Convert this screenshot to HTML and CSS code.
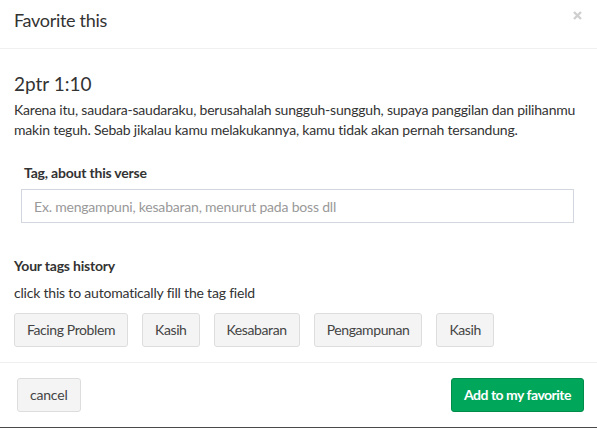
FILE: index.html
```html
<!DOCTYPE html>
<html>
<head>
<meta charset="utf-8">
<link rel="stylesheet" href="styles.css">
</head>
<body>
<div class="modal">
  <div class="modal-header">
    <h4 class="modal-title">Favorite this</h4>
    <button class="close" type="button" aria-label="Close">
      <svg width="9" height="9" viewBox="0 0 9 9"><path d="M1 1L8 8M8 1L1 8" stroke="#cfcfcf" stroke-width="2.4" stroke-linecap="butt"/></svg>
    </button>
  </div>
  <div class="modal-body">
    <h4 class="verse-ref">2ptr 1:10</h4>
    <p class="verse-text">Karena itu, saudara-saudaraku, berusahalah sungguh-sungguh, supaya panggilan dan pilihanmu makin teguh. Sebab jikalau kamu melakukannya, kamu tidak akan pernah tersandung.</p>
    <div class="form-group">
      <label class="label">Tag, about this verse</label>
      <input class="form-control" type="text" placeholder="Ex. mengampuni, kesabaran, menurut pada boss dll">
    </div>
    <div class="history">
      <div class="history-title">Your tags history</div>
      <div class="history-hint">click this to automatically fill the tag field</div>
      <div class="tags">
        <button class="btn btn-default btn-tag" type="button">Facing Problem</button>
        <button class="btn btn-default btn-tag" type="button">Kasih</button>
        <button class="btn btn-default btn-tag" type="button">Kesabaran</button>
        <button class="btn btn-default btn-tag" type="button">Pengampunan</button>
        <button class="btn btn-default btn-tag" type="button">Kasih</button>
      </div>
    </div>
  </div>
  <div class="modal-footer">
    <button class="btn btn-default" type="button">cancel</button>
    <button class="btn btn-success" type="button">Add to my favorite</button>
  </div>
</div>
</body>
</html>
```
FILE: styles.css
```css
* { box-sizing: border-box; }
html, body { margin: 0; padding: 0; background: #fff; }
body {
  font-family: Lato, "Open Sans", sans-serif;
  font-size: 14px;
  line-height: 20px;
  letter-spacing: -0.2px;
  color: #333;
}
.modal {
  width: 597px;
  height: 428px;
  border-bottom: 1px solid #4a4a4a;
  display: flex;
  flex-direction: column;
}
.modal-header {
  flex-shrink: 0;
  border-bottom: 1px solid #f0f0f0;
  padding: 7px 14px 15px 14px;
  display: flex;
  justify-content: space-between;
  align-items: flex-start;
}
.modal-title {
  margin: 0;
  font-size: 18px;
  line-height: 26px;
  font-weight: 400;
  letter-spacing: -0.3px;
}
.close {
  border: 0;
  background: none;
  padding: 0;
  margin: 4px 1px 0 0;
  cursor: pointer;
  display: flex;
}
.modal-body {
  flex-shrink: 0;
  padding: 22px 14px 15px 14px;
}
.verse-ref {
  margin: 0;
  font-size: 19px;
  line-height: 26px;
  font-weight: 400;
  letter-spacing: 0;
}
.verse-text {
  margin: 3px 0 0 0;
}
.form-group {
  margin: 23px 9px 0 7px;
}
.label {
  display: block;
  font-weight: 700;
  padding-left: 3px;
  margin-bottom: 6px;
}
.form-control {
  display: block;
  width: 100%;
  height: 34px;
  border: 1px solid #d2d6de;
  border-radius: 0;
  padding: 6px 12px;
  font-family: inherit;
  font-size: 14px;
  letter-spacing: -0.2px;
  color: #333;
  outline: none;
}
.form-control::placeholder { color: #999; }
.history { margin-top: 33px; }
.history-title { font-weight: 700; }
.history-hint { margin-top: 7px; }
.tags {
  margin-top: 10px;
  display: flex;
  gap: 14px;
}
.btn {
  font-family: inherit;
  font-size: 14px;
  line-height: 20px;
  letter-spacing: -0.2px;
  height: 34px;
  padding: 6px 12px;
  border-radius: 3px;
  border: 1px solid #ddd;
  cursor: pointer;
}
.btn-tag { letter-spacing: -0.4px; }
.btn-default {
  background: #f4f4f4;
  color: #444;
}
.btn-success {
  background: #00a65a;
  border-color: #008d4c;
  color: #fff;
  font-weight: 700;
  letter-spacing: -0.5px;
}
.modal-footer {
  flex: 1;
  border-top: 1px solid #f0f0f0;
  padding: 15px 13px 0 17px;
  display: flex;
  justify-content: space-between;
  align-items: flex-start;
}
```
